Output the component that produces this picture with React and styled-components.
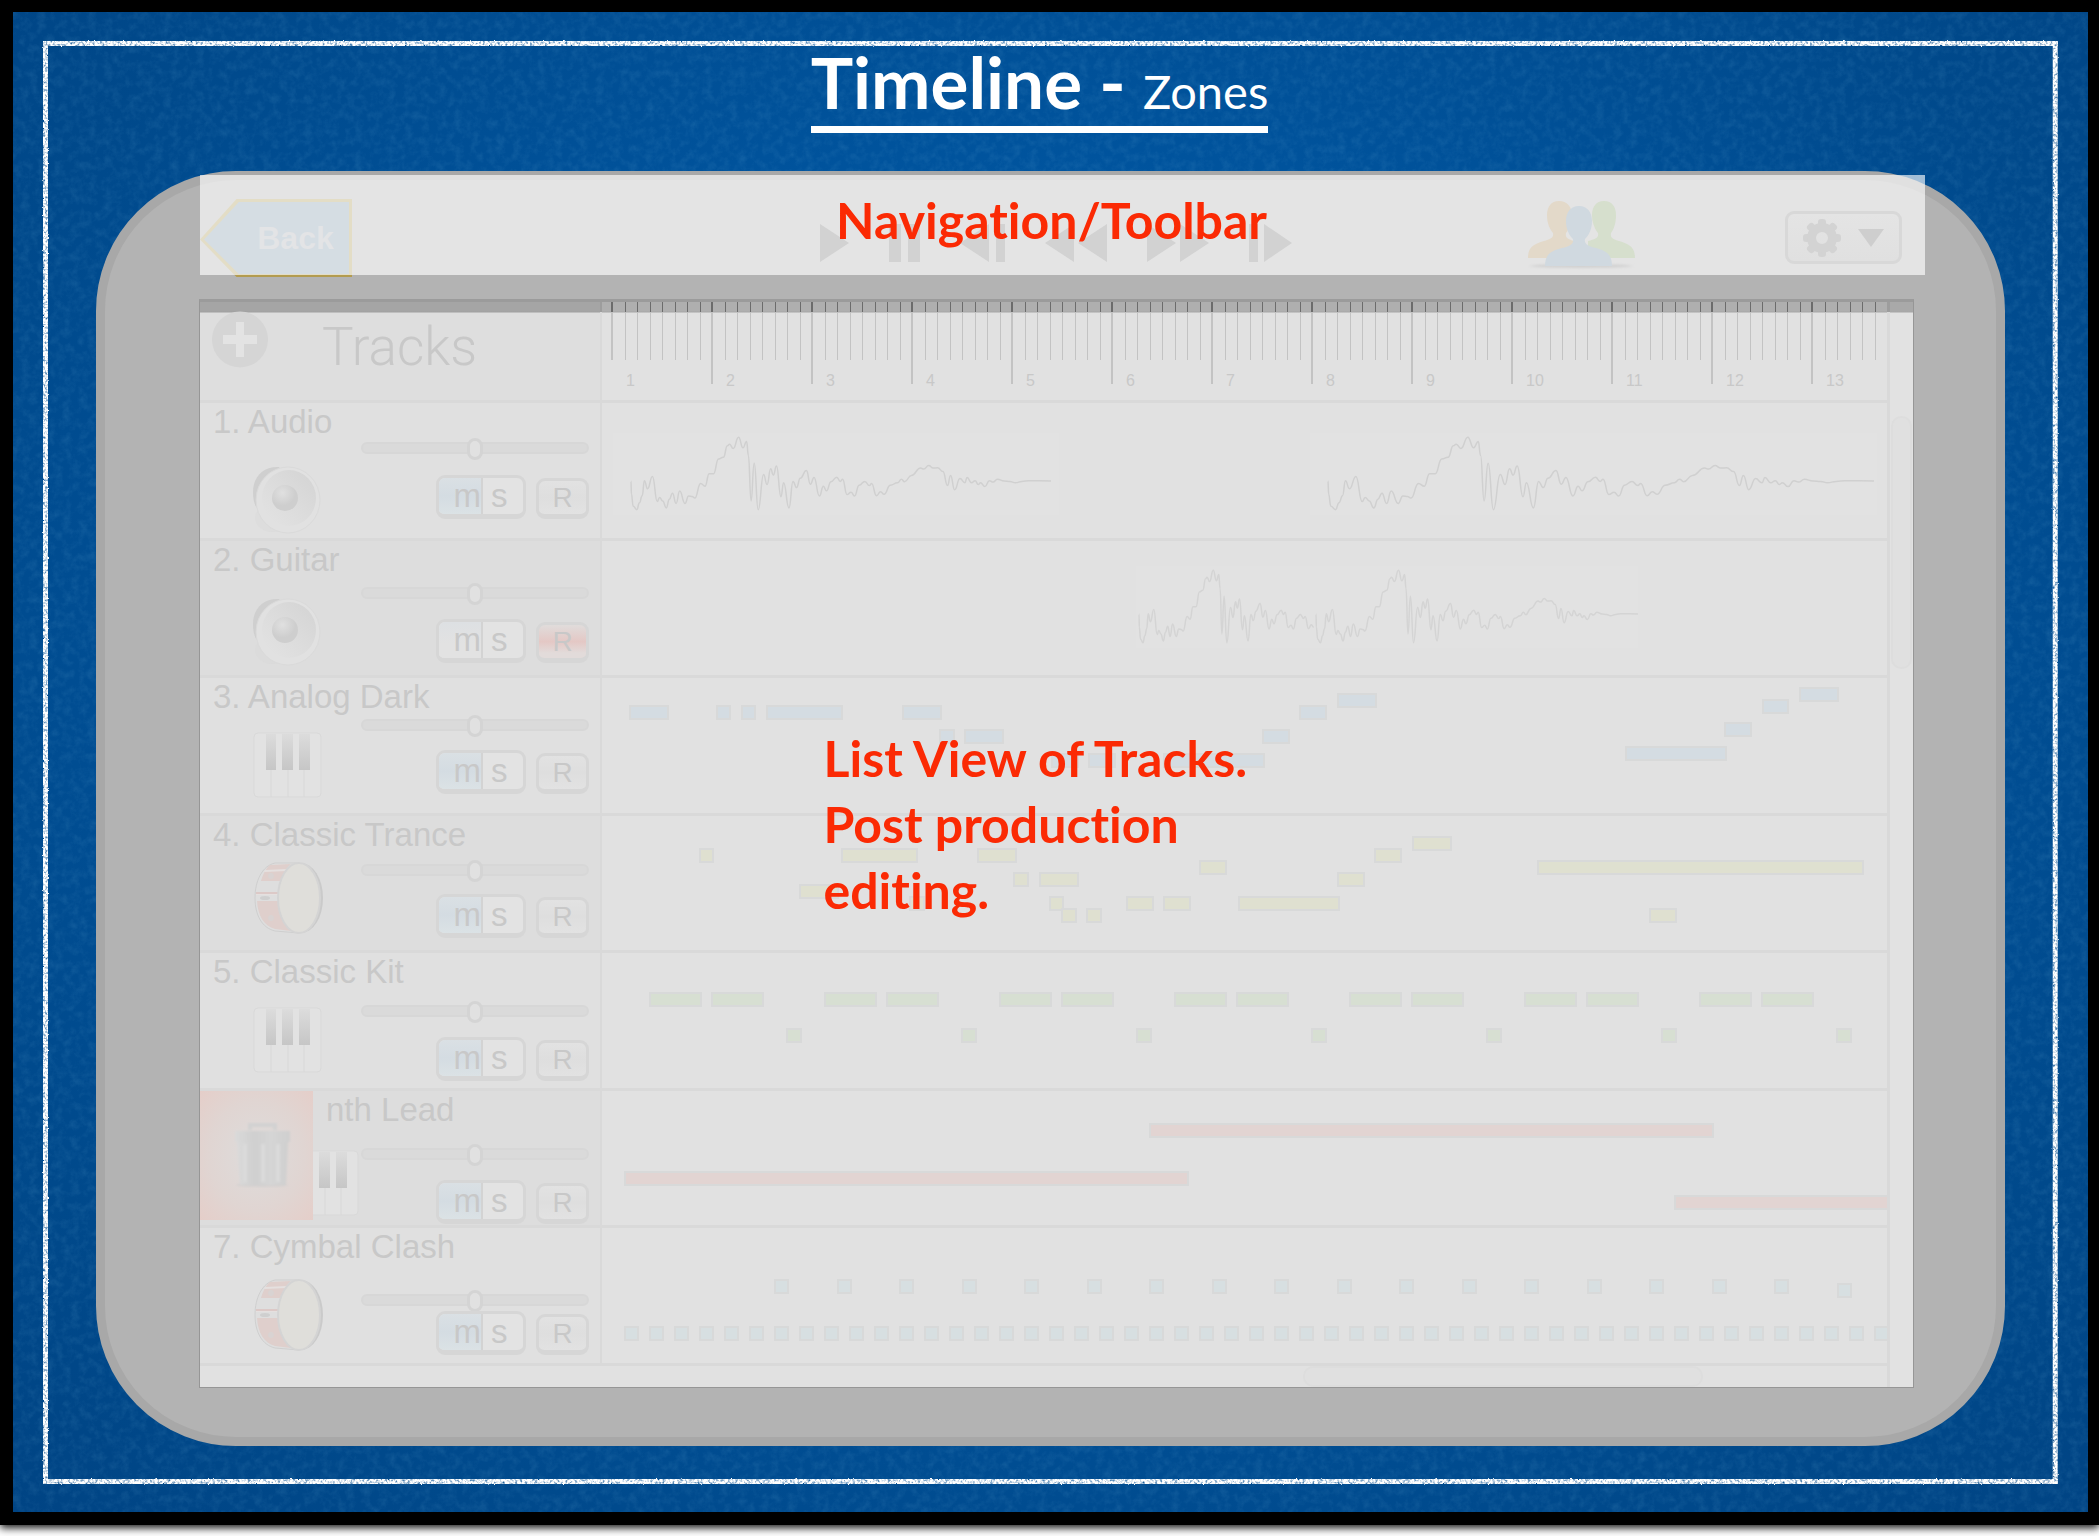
import React from "react";
import styled, { createGlobalStyle, css } from "styled-components";

const sans = `"Liberation Sans", Arial, sans-serif`;
const hand = `Lato, "Open Sans", sans-serif`;

const c = {
  frame: "#b3b3b3",
  frameEdge: "#a8a8a8",
  line: "#d9d9d9",
  lane: "#e1e1e1",
  ink: "#c8c8c8",
  glyph: "#d2d2d2",
  note: "#d8d9d9",
  red: "#fb2a04",
};

const GlobalStyle = createGlobalStyle`
  *, *::before, *::after { box-sizing: border-box; }
  body { margin: 0; background: #fff; font-family: ${sans}; }
  button { margin: 0; padding: 0; border: 0; background: none; font-family: inherit; cursor: pointer; }
  svg { display: block; }
`;

/* ---------- slide ---------- */

const Page = styled.div`
  min-height: 100vh;
  padding-bottom: 11px;
  display: flex;
  overflow: hidden;
`;

const BlackMat = styled.div`
  flex: 1;
  display: flex;
  padding: 12px 11px 13px 13px;
  background: #000;
  box-shadow: 0 3px 8px rgba(0, 0, 0, 0.9);
`;

const Board = styled.main`
  position: relative;
  flex: 1;
  display: flex;
  flex-direction: column;
  padding: 30px 83px 66px;
  background: radial-gradient(ellipse at 50% 45%, #005cab 0%, #0055a0 40%, #00498b 80%, #004484 100%);
`;

const BoardTexture = styled.svg`
  position: absolute;
  inset: 0;
  width: 100%;
  height: 100%;
`;

const TitleBar = styled.header`
  position: relative;
  display: flex;
  justify-content: center;
  padding-right: 22px;
  margin-bottom: 38px;
`;

const Title = styled.h1`
  margin: 0;
  padding-bottom: 4px;
  border-bottom: 7px solid #fff;
  font: 700 71px/80px ${hand};
  font-variant-ligatures: none;
  color: #fff;
  white-space: nowrap;
`;

const TitleSmall = styled.span`
  font-size: 47px;
  font-weight: 400;
  line-height: 47px;
`;

const Device = styled.section`
  position: relative;
  flex: 1;
  display: flex;
  flex-direction: column;
  gap: 24px;
  padding: 0 71px 49px 94px;
  border: 9px solid ${c.frameEdge};
  border-radius: 140px;
  background: ${c.frame};
`;

/* ---------- toolbar ---------- */

const Toolbar = styled.nav`
  position: relative;
  display: grid;
  grid-template-columns: auto 467fr auto 235fr auto 150fr auto;
  align-items: start;
  height: 100px;
  margin-top: -5px;
  margin-left: 1px;
  padding-right: 23px;
  background: rgba(255, 255, 255, 0.64);
`;

const arrowShape = "polygon(0 52%, 24% 0, 100% 0, 100% 100%, 24% 100%)";

const BackButton = styled.button`
  position: relative;
  width: 152px;
  height: 78px;
  margin-top: 24px;
  padding-left: 39px;
  background: linear-gradient(#e3ddc6 76px, #b39c50 76px);
  clip-path: ${arrowShape};
  font: 700 32px/78px ${sans};
  color: #e3e4e6;
  &::before {
    content: "";
    position: absolute;
    inset: 3px 3px 3px 4px;
    background: #d5dde3;
    clip-path: ${arrowShape};
  }
`;

const BackText = styled.span`
  position: relative;
`;

const Transport = styled.div`
  grid-column: 3;
  display: flex;
  gap: 40px;
  margin-top: 49px;
`;

const PeopleButton = styled.button`
  grid-column: 5;
  margin-top: 26px;
`;

const SettingsButton = styled.button`
  grid-column: 7;
  display: flex;
  align-items: center;
  gap: 16px;
  width: 117px;
  height: 53px;
  margin-top: 36px;
  padding-left: 14px;
  border: 3px solid #d8d8d8;
  border-radius: 9px;
  background: linear-gradient(#e4e4e4, #e0e0e0);
`;

const ZoneLabel = styled.p`
  position: absolute;
  margin: 0;
  font: 700 50px/66px ${hand};
  font-variant-ligatures: none;
  color: ${c.red};
  pointer-events: none;
  white-space: nowrap;
`;

const ToolbarLabel = styled(ZoneLabel)`
  top: 12px;
  left: 0;
  right: 22px;
  text-align: center;
`;

const TracksLabel = styled(ZoneLabel)`
  top: 423px;
  left: 36.4%;
  width: 460px;
  white-space: normal;
`;

/* ---------- workspace ---------- */

const Workspace = styled.section`
  position: relative;
  flex: 1;
  display: flex;
  margin-right: 11px;
  border: 1px solid #969696;
  border-top: 3px solid #9b9b9b;
  background: ${c.lane};
`;

const Content = styled.div`
  flex: 1;
  min-width: 0;
  display: flex;
  flex-direction: column;
`;

const Split = css`
  display: grid;
  grid-template-columns: 402px minmax(0, 1fr);
  border-bottom: 3px solid ${c.line};
`;

const HeaderRow = styled.div`
  ${Split}
  height: 101px;
`;

const HeaderCell = styled.div`
  display: flex;
  align-items: flex-start;
  gap: 54px;
  padding: 9px 0 0 12px;
  background:
    linear-gradient(#9d9d9d 10px, ${c.line} 10px) right / 2px 100% no-repeat,
    linear-gradient(#a5a5a5 9px, #a0a0a0 10px, #dedede 11px);
`;

const Heading = styled.h2`
  margin: 0;
  padding-top: 3px;
  font: 300 53px/66px Roboto, ${sans};
  color: ${c.ink};
`;

const Ruler = styled.div`
  display: flex;
  overflow: hidden;
  padding-left: 9px;
  background: linear-gradient(#afafaf 9px, #a6a6a6 10px, ${c.lane} 11px);
`;

const tick = "linear-gradient(#6c6c6c 10px, #c3c3c3 10px)";

const minorTicks = [1, 2, 3, 4, 5, 6, 7]
  .map((n) => `${tick} ${Math.round(n * 12.5) + 1}px 0 / 1px 58px no-repeat`)
  .join(",");

const Measure = styled.div`
  flex: none;
  width: 100px;
  height: 90px;
  padding: 69px 0 0 15px;
  background:
    ${tick} 0 0 / 2px ${(p) => (p.$first ? "58px" : "82px")} no-repeat,
    ${minorTicks};
  font: 16px/20px ${sans};
  color: ${c.ink};
`;

const TrackList = styled.div`
  flex: 1;
  display: flex;
  flex-direction: column;
`;

const TrackRow = styled.article`
  ${Split}
  flex: 1 1 0;
  min-height: 0;
`;

const TrackHead = styled.div`
  display: flex;
  border-right: 2px solid ${c.line};
  background: ${(p) => (p.$dark ? "#dddddd" : "#e0e0e0")};
`;

const TrackBody = styled.div`
  flex: 1;
  min-width: 0;
  display: flex;
  flex-direction: column;
  padding-right: 11px;
`;

const TrackName = styled.h3`
  flex: none;
  margin: 0;
  padding-left: 13px;
  font: 400 33px/38px ${sans};
  color: ${c.ink};
  white-space: nowrap;
`;

const TrackTools = styled.div`
  display: flex;
  justify-content: space-between;
  align-items: flex-start;
  height: 0;
`;

const IconSlot = styled.div`
  padding: ${(p) => p.$top}px 0 0 ${(p) => (p.$flush ? 0 : 53)}px;
`;

const Controls = styled.div`
  flex: none;
  width: 228px;
  display: flex;
  flex-direction: column;
  gap: ${(p) => p.$gap}px;
  padding-top: ${(p) => p.$top}px;
`;

const Volume = styled.input`
  appearance: none;
  width: 228px;
  height: 14px;
  margin: 0;
  background: none;
  &::-webkit-slider-runnable-track {
    height: 12px;
    border: 2px solid #d7d7d7;
    border-radius: 6px;
    background: #dadada;
  }
  &::-webkit-slider-thumb {
    appearance: none;
    width: 16px;
    height: 22px;
    margin-top: -6px;
    border: 3px solid #d4d4d4;
    border-radius: 8px;
    background: #e1e1e1;
  }
`;

const ButtonLine = styled.div`
  display: flex;
  justify-content: flex-end;
  align-items: flex-end;
  gap: 10px;
`;

const keyStyle = css`
  border: 3px solid #d6d6d6;
  border-bottom-width: 5px;
  border-radius: 9px;
`;

const Pair = styled.div`
  ${keyStyle}
  display: grid;
  grid-template-columns: 44px 1fr;
  width: 90px;
  height: 44px;
  background: #e3e3e3;
  overflow: hidden;
`;

const Half = styled.button`
  text-align: ${(p) => (p.$mute ? "right" : "left")};
  padding-left: ${(p) => (p.$mute ? 13 : 8)}px;
  border-right: ${(p) => (p.$mute ? "2px solid #d3d3d3" : "0")};
  background: ${(p) =>
    p.$on ? "linear-gradient(#dae0e4, #d4dce2 50%, #dbe2e5)" : p.$mute ? "linear-gradient(#dde0e3, #e2e2e2 60%)" : "none"};
  font: 33px/36px ${sans};
  color: ${c.ink};
`;

const RecordButton = styled.button`
  ${keyStyle}
  width: 53px;
  height: 41px;
  background: ${(p) =>
    p.$armed ? "linear-gradient(#e0dcdb, #e4c8c5 50%, #e2dbda 85%)" : "linear-gradient(#e2e2e2, #dedede 50%, #e2e2e2)"};
  font: 28px/33px ${sans};
  color: ${c.ink};
`;

const DeleteButton = styled.button`
  flex: none;
  display: flex;
  align-items: center;
  width: 113px;
  height: 129px;
  padding-left: 33px;
  background: radial-gradient(ellipse at center, #dedbda 10%, #e0d5d2 60%, #e5cec9 100%);
`;

const Lane = styled.div`
  position: relative;
  overflow: hidden;
  background: ${c.lane};
`;

const Note = styled.span`
  position: absolute;
  height: 15px;
  border: 2px solid ${c.note};
  background: ${(p) => p.$fill};
`;

const Wave = styled.svg`
  position: absolute;
  background: #e2e2e2;
`;

const VScroll = styled.div`
  width: 26px;
  padding: 114px 0 0 4px;
  background:
    linear-gradient(#9d9d9d 10px, ${c.line} 10px) left / 3px 100% no-repeat,
    linear-gradient(#a9a9a9 9px, #a6a6a6 10px, #e2e2e2 11px);
`;

const VThumb = styled.div`
  width: 21px;
  height: 253px;
  border: 2px solid #dddddd;
  border-radius: 10px;
  background: #e0e0e0;
`;

const HScroll = styled.div`
  display: flex;
  height: 21px;
  background: #e1e1e1;
`;

const HThumb = styled.div`
  width: 400px;
  margin-left: auto;
  margin-right: 184px;
  border: 2px solid #dddddd;
  border-radius: 10px;
  background: #e0e0e0;
`;

/* ---------- drawings ---------- */

const Glyph = ({ w, d }) => (
  <svg width={w} height="38" viewBox={`0 0 ${w} 38`} fill={c.glyph} aria-hidden="true">
    <path d={d} />
  </svg>
);

const transport = [
  ["Play", 29, "M0 0L29 19L0 38Z"],
  ["Pause", 31, "M0 0H12V38H0ZM19 0H31V38H19Z"],
  ["Step back", 45, "M29 0V38L0 19ZM36 0H45V38H36Z"],
  ["Rewind", 62, "M29 0V38L0 19ZM62 0V38L33 19Z"],
  ["Fast forward", 62, "M0 0L29 19L0 38ZM33 0L62 19L33 38Z"],
  ["Step forward", 43, "M0 0H9V38H0ZM15 0L43 19L15 38Z"],
];

const People = () => (
  <svg width="107" height="69" viewBox="0 0 107 69" aria-hidden="true">
    <defs>
      <filter id="soft" x="-10%" y="-100%" width="120%" height="300%">
        <feGaussianBlur stdDeviation="2 1" />
      </filter>
    </defs>
    <ellipse cx="53" cy="65" rx="51" ry="2" fill="#d2d2d2" filter="url(#soft)" />
    <path
      d="M31 0C23 0 19 6 19 14C19 23 22 28 25 32C26 37 22 38 16 40C6 43 0 46 0 57H60C60 46 54 43 46 40C40 38 37 37 38 32C41 28 44 22 44 14C44 6 39 0 31 0Z"
      fill="#e3d9c9"
    />
    <path
      d="M76 0C68 0 64 6 64 14C64 22 67 28 70 32C71 37 67 38 60 40V57H107C107 46 101 43 91 40C85 38 82 37 83 32C86 28 88 22 88 14C88 6 84 0 76 0Z"
      fill="#d6dfcd"
    />
    <path
      d="M51 5C42 5 38 12 38 20C38 28 41 34 45 38C46 43 42 45 34 47C22 50 17 54 17 65H84C84 54 79 50 68 47C60 45 56 43 57 38C61 34 64 28 64 20C64 12 60 5 51 5Z"
      fill="#d0d9e0"
    />
  </svg>
);

const Gear = () => (
  <svg width="40" height="38" viewBox="-20 -19 40 38" fill="#d3d3d3" aria-hidden="true">
    {[0, 45, 90, 135, 180, 225, 270, 315].map((a) => (
      <rect key={a} x="-4" y="-19" width="8" height="10" rx="3" transform={`rotate(${a})`} />
    ))}
    <circle r="10.5" fill="none" stroke="#d3d3d3" strokeWidth="9" />
  </svg>
);

const Plus = () => (
  <svg width="56" height="57" viewBox="0 0 56 57" aria-hidden="true">
    <circle cx="28" cy="28.5" r="28" fill="#d5d5d5" />
    <path d="M24 11H32V24H45V33H32V46H24V33H11V24H24Z" fill="#e3e3e3" />
  </svg>
);

const Speaker = ({ id }) => (
  <svg width="72" height="68" viewBox="0 0 72 68" aria-hidden="true">
    <defs>
      <linearGradient id={id} x1="0" y1="1" x2="1" y2="0">
        <stop offset="0" stopColor="#e3e3e3" />
        <stop offset=".55" stopColor="#dbdbdb" />
        <stop offset="1" stopColor="#d3d3d3" />
      </linearGradient>
      <radialGradient id={`${id}-dome`} cx=".4" cy=".3">
        <stop offset="0" stopColor="#e0e0e0" />
        <stop offset="1" stopColor="#cecece" />
      </radialGradient>
    </defs>
    <ellipse cx="20" cy="52" rx="18" ry="14" fill="#d9d9d9" opacity=".5" />
    <path d="M26 1C10 0 0 11 0 26C0 33 1 38 4 42L31 8Z" fill="#cfcfcf" />
    <ellipse cx="35" cy="34" rx="32" ry="33" fill="#e1e1e1" stroke="#dadada" />
    <ellipse cx="36" cy="32" rx="27" ry="28" fill={`url(#${id})`} />
    <circle cx="32" cy="32" r="13" fill={`url(#${id}-dome)`} />
  </svg>
);

const Piano = ({ id, cut }) => (
  <svg width={cut ? 46 : 69} height="66" viewBox={cut ? "23 0 46 66" : "0 0 69 66"} aria-hidden="true">
    <defs>
      <linearGradient id={id} x1="0" y1="0" x2="0" y2="1">
        <stop offset="0" stopColor="#dcdcdc" />
        <stop offset="1" stopColor="#c6c6c6" />
      </linearGradient>
    </defs>
    <rect x="1" y="1" width="67" height="64" rx="4" fill="#e2e2e2" stroke="#d9d9d9" />
    <path d="M18 38V65M35 38V65M51 38V65" stroke="#d8d8d8" />
    <path d="M13 2H23V38H13ZM29 2H40V38H29ZM46 2H57V38H46Z" fill={`url(#${id})`} />
  </svg>
);

const Drum = () => (
  <svg width="70" height="72" viewBox="0 0 70 72" aria-hidden="true">
    <path d="M46 1H22C9 4 2 19 2 36C2 53 9 66 22 69L46 71Z" fill="#dedede" stroke="#cfcfcf" />
    <path d="M17 3L38 2C33 6 30 12 28 19H8C10 12 13 6 17 3ZM4 39H26C27 51 30 62 38 69L22 67C11 64 5 54 4 39Z" fill="#dfcfcc" />
    <path d="M3 31H27V33H3ZM12 8L34 7V9L11 10Z" fill="#e5e0df" />
    <path d="M3 31H27" stroke="#dcc9c7" strokeWidth="2" />
    <ellipse cx="48" cy="36" rx="22" ry="35" fill="#cacaca" />
    <ellipse cx="46" cy="36" rx="21" ry="35" fill="#dfdeda" stroke="#d4d4d4" strokeWidth="2" />
    <ellipse cx="12" cy="36" rx="5" ry="2" fill="#cfcfcf" />
    <circle cx="18" cy="56" r="3" fill="#d9d3d2" />
    <circle cx="18" cy="14" r="3" fill="#d9d3d2" />
  </svg>
);

const Trash = () => (
  <svg width="59" height="66" viewBox="0 0 59 66" aria-hidden="true">
    <defs>
      <linearGradient id="can">
        <stop offset="0" stopColor="#dadada" />
        <stop offset=".35" stopColor="#cfcfcf" />
        <stop offset=".65" stopColor="#d5d5d5" />
        <stop offset="1" stopColor="#cfcfcf" />
      </linearGradient>
      <filter id="can-blur">
        <feGaussianBlur stdDeviation="0.8" />
      </filter>
    </defs>
    <g filter="url(#can-blur)">
      <ellipse cx="29" cy="63" rx="26" ry="2" fill="#cccccc" opacity=".6" />
      <path d="M17 8V3H42V8" fill="none" stroke="#d2d2d2" strokeWidth="4" />
      <path d="M2 9H57V20H2Z" fill="url(#can)" />
      <path d="M4 20H55L53 63H7Z" fill="url(#can)" />
      <path d="M12 22V60M30 22V60M45 22V60" stroke="#dadada" strokeWidth="4" />
    </g>
  </svg>
);

const wavePoints = [
  [69,233],[70,270],[74,305],[82,315],[88,295],[94,275],[99,232],[106,255],[117,220],[128,292],[133,280],[140,290],
  [148,310],[155,285],[162,268],[170,297],[178,262],[190,297],[198,276],[206,277],[212,282],[225,240],[235,248],
  [244,212],[254,212],[265,170],[276,165],[285,132],[290,128],[298,140],[310,108],[320,138],[328,120],[332,160],
  [338,290],[345,182],[354,315],[366,214],[374,243],[382,198],[388,216],[395,190],[405,278],[411,238],[423,310],
  [432,234],[440,252],[448,225],[462,203],[471,242],[479,223],[491,276],[500,248],[507,261],[517,235],[530,222],
  [538,234],[543,228],[553,272],[562,265],[570,276],[580,245],[593,234],[603,246],[608,240],[619,275],[628,264],
  [636,271],[650,245],[666,238],[675,228],[682,235],[697,217],[718,196],[725,199],[736,189],[746,196],[756,195],
  [768,206],[778,246],[785,217],[794,258],[806,226],[817,238],[822,223],[832,238],[840,232],[847,243],[852,238],
  [862,249],[872,232],[880,236],[890,228],[905,233],[918,234],[930,238],[945,234],[960,232],[1010,233],
];

const wavePath = (x, width, until = 1) => {
  const pts = wavePoints
    .map(([px, py]) => [(px - 69) / 941, (py - 107) / 209])
    .filter(([u]) => u <= until)
    .map(([u, v]) => [x + u * width, 4 + v * 73]);
  const f = (n) => n.toFixed(1);
  return pts
    .map(([a, b], i) => {
      if (i === 0) return `M${f(a)} ${f(b)}`;
      const [p, q] = pts[i - 1];
      const m = (p + a) / 2;
      return `C${f(m)} ${f(q)} ${f(m)} ${f(b)} ${f(a)} ${f(b)}`;
    })
    .join("");
};

const Waveform = ({ left, top, width, parts, faint }) => (
  <Wave width={width} height="82" style={{ left, top }} aria-hidden="true">
    {parts.map(([x, w, until], i) => (
      <path key={i} d={wavePath(x, w, until)} fill="none" stroke={faint ? "#d4d4d4" : "#d0d0d0"} strokeWidth="1.5" />
    ))}
  </Wave>
);

/* ---------- data: notes are [left, top, width] inside a lane ---------- */

const range = (n) => Array.from({ length: n }, (_, i) => i);

const blue = [
  [27,27,40],[114,27,15],[139,27,15],[164,27,77],[300,27,40],[337,51,16],[362,51,40],[449,75,28],[486,75,28],
  [561,75,102],[660,51,28],[697,27,28],[735,15,40],[1023,68,102],[1122,44,28],[1160,21,27],[1197,9,40],
];

const yellow = [
  [97,32,15],[239,32,77],[375,32,40],[197,68,40],[411,56,16],[437,56,40],[447,80,15],[459,92,16],[484,92,16],
  [307,80,16],[524,80,28],[561,80,28],[597,44,28],[636,80,102],[735,56,28],[772,32,28],[810,20,40],[935,44,327],
  [1047,92,28],
];

const green = [
  ...range(7).flatMap((i) => [[47 + i * 175, 39, 53], [109 + i * 175, 39, 53]]),
  ...range(7).map((i) => [184 + i * 175, 75, 16]),
];

const redNotes = [[547,32,565],[22,80,565],[1072,104,600]];

const teal = [
  ...range(18).map((i) => [172 + Math.round(i * 62.5), i === 17 ? 55 : 51, 15]),
  ...range(51).map((i) => [22 + i * 25, 98, 15]),
];

/* at: icon top, slider top, gap between slider and buttons */
const tracks = [
  { name: "1. Audio", icon: "speaker", at: [25, 0, 20], mute: true,
    waves: [
      { left: 11, top: 30, width: 446, parts: [[18, 420]] },
      { left: 708, top: 30, width: 567, parts: [[18, 546]] },
    ] },
  { name: "2. Guitar", icon: "speaker", at: [19, 7, 19], dark: true, armed: true,
    waves: [{ left: 534, top: 25, width: 502, faint: true, parts: [[3, 290, 0.61], [180, 322]] }] },
  { name: "3. Analog Dark", icon: "piano", at: [16, 2, 18], mute: true, fill: "#d4dce2", notes: blue },
  { name: "4. Classic Trance", icon: "drum", at: [8, 9, 17], mute: true, dark: true, fill: "#dfe0d0", notes: yellow },
  { name: "5. Classic Kit", icon: "piano", at: [16, 13, 19], mute: true, fill: "#d7dfd2", notes: green },
  { name: "nth Lead", icon: "piano", at: [21, 18, 19], mute: true, dark: true, trash: true, fill: "#e2d4d2", notes: redNotes },
  { name: "7. Cymbal Clash", icon: "drum", at: [13, 27, 4], mute: true, fill: "#d7dfe1", notes: teal },
];

const TrackIcon = ({ kind, id, cut }) => {
  if (kind === "speaker") return <Speaker id={id} />;
  if (kind === "drum") return <Drum />;
  return <Piano id={id} cut={cut} />;
};

function Track({ track, index }) {
  const [iconTop, sliderTop, gap] = track.at;
  return (
    <TrackRow>
      <TrackHead $dark={track.dark}>
        {track.trash && (
          <DeleteButton aria-label="Delete track">
            <Trash />
          </DeleteButton>
        )}
        <TrackBody>
          <TrackName>{track.name}</TrackName>
          <TrackTools>
            <IconSlot $top={iconTop} $flush={track.trash}>
              <TrackIcon kind={track.icon} id={`icon-${index}`} cut={track.trash} />
            </IconSlot>
            <Controls $top={sliderTop} $gap={gap}>
              <Volume type="range" defaultValue="50" aria-label={`${track.name} volume`} />
              <ButtonLine>
                <Pair>
                  <Half $mute $on={track.mute} aria-pressed={!!track.mute}>m</Half>
                  <Half>s</Half>
                </Pair>
                <RecordButton $armed={track.armed} aria-pressed={!!track.armed}>R</RecordButton>
              </ButtonLine>
            </Controls>
          </TrackTools>
        </TrackBody>
      </TrackHead>
      <Lane>
        {(track.waves || []).map((w) => (
          <Waveform key={w.left} {...w} />
        ))}
        {(track.notes || []).map(([left, top, width], i) => (
          <Note key={i} $fill={track.fill} style={{ left, top, width }} />
        ))}
      </Lane>
    </TrackRow>
  );
}

const ChalkLines = () => (
  <BoardTexture aria-hidden="true">
    <defs>
      <filter id="paper" x="0" y="0" width="100%" height="100%">
        <feTurbulence type="fractalNoise" baseFrequency="0.12" numOctaves="5" seed="4" />
        <feColorMatrix values="0 0 0 0 .2  0 0 0 0 .5  0 0 0 0 .75  1 0 0 0 -.4" />
      </filter>
      <filter id="chalk" filterUnits="userSpaceOnUse" x="0" y="0" width="100%" height="100%">
        <feTurbulence type="fractalNoise" baseFrequency="0.4" numOctaves="2" seed="8" result="n" />
        <feDisplacementMap in="SourceGraphic" in2="n" scale="2" result="d" />
        <feColorMatrix in="n" values="0 0 0 0 1  0 0 0 0 1  0 0 0 0 1  0 2 0 0 -.1" result="m" />
        <feComposite in="d" in2="m" operator="in" />
      </filter>
    </defs>
    <rect width="100%" height="100%" filter="url(#paper)" opacity=".25" />
    <g filter="url(#chalk)" fill="#fff">
      <rect x="30" y="29" width="97.1%" height="5" />
      <rect x="30" y="97.8%" width="97.1%" height="5" />
      <rect x="30" y="29" width="5" height="96.1%" />
      <rect x="98.3%" y="29" width="5" height="96.1%" />
    </g>
  </BoardTexture>
);

export default function App() {
  return (
    <Page>
      <GlobalStyle />
      <BlackMat>
        <Board>
          <ChalkLines />
          <TitleBar>
            <Title>
              Timeline - <TitleSmall>Zones</TitleSmall>
            </Title>
          </TitleBar>
          <Device>
            <Toolbar aria-label="Toolbar">
              <BackButton>
                <BackText>Back</BackText>
              </BackButton>
              <Transport>
                {transport.map(([label, w, d]) => (
                  <button key={label} aria-label={label}>
                    <Glyph w={w} d={d} />
                  </button>
                ))}
              </Transport>
              <PeopleButton aria-label="Collaborators">
                <People />
              </PeopleButton>
              <SettingsButton aria-label="Settings">
                <Gear />
                <svg width="26" height="18" viewBox="0 0 26 18" aria-hidden="true">
                  <path d="M0 0H26L13 18Z" fill="#cecece" />
                </svg>
              </SettingsButton>
              <ToolbarLabel>Navigation/Toolbar</ToolbarLabel>
            </Toolbar>
            <Workspace>
              <Content>
                <HeaderRow>
                  <HeaderCell>
                    <button aria-label="Add track">
                      <Plus />
                    </button>
                    <Heading>Tracks</Heading>
                  </HeaderCell>
                  <Ruler>
                    {range(13).map((i) => (
                      <Measure key={i} $first={i === 0}>
                        {i + 1}
                      </Measure>
                    ))}
                  </Ruler>
                </HeaderRow>
                <TrackList>
                  {tracks.map((t, i) => (
                    <Track key={t.name} track={t} index={i} />
                  ))}
                </TrackList>
                <HScroll>
                  <HThumb />
                </HScroll>
              </Content>
              <VScroll>
                <VThumb />
              </VScroll>
              <TracksLabel>List View of Tracks. Post production editing.</TracksLabel>
            </Workspace>
          </Device>
        </Board>
      </BlackMat>
    </Page>
  );
}
